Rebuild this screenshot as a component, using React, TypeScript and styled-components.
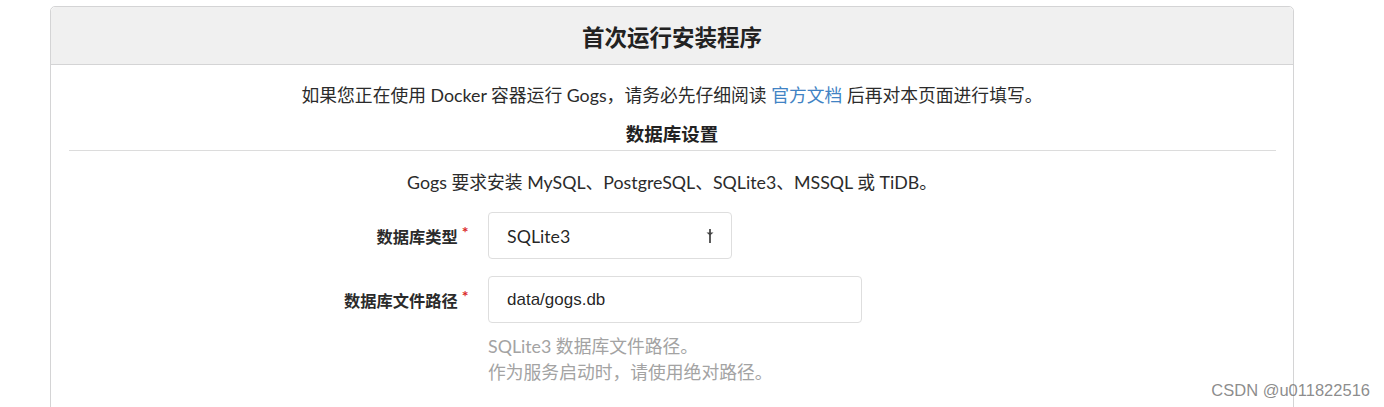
import React from 'react';
import styled, { createGlobalStyle } from 'styled-components';

const GlobalStyle = createGlobalStyle`
  html, body {
    margin: 0;
    padding: 0;
    background: #ffffff;
  }
  body {
    font-family: Lato, "Noto Sans CJK SC", sans-serif;
    color: rgba(0, 0, 0, 0.87);
  }
`;

const Page = styled.div`
  position: relative;
  width: 1384px;
  height: 407px;
  overflow: hidden;
  padding: 6px 0 0 50px;
  box-sizing: border-box;
`;

const Card = styled.section`
  width: 1244px;
  border: 1px solid #d4d4d5;
  border-radius: 5px;
  box-sizing: border-box;
  min-height: 420px;
`;

const CardHeader = styled.h3`
  margin: 0;
  height: 57px;
  display: flex;
  align-items: center;
  justify-content: center;
  background: #f0f0f0;
  border-bottom: 1px solid #d4d4d5;
  border-radius: 5px 5px 0 0;
  font-size: 22.5px;
  font-weight: 700;
  color: #222222;
`;

const CardBody = styled.div`
  padding: 17px 17.5px 0;
`;

const Notice = styled.p`
  margin: 0;
  text-align: center;
  font-size: 17.8px;
  line-height: 26px;
  color: #2b2b2b;
`;

const Link = styled.a`
  color: #4183c4;
  text-decoration: none;
`;

const SectionTitle = styled.h4`
  margin: 14px 0 0;
  padding-bottom: 4px;
  text-align: center;
  font-size: 18.5px;
  line-height: 24px;
  font-weight: 700;
  color: #222222;
  border-bottom: 1px solid #dcdcdc;
`;

const Requirement = styled(Notice)`
  margin-top: 18px;
`;

const FieldRow = styled.div`
  display: flex;
  align-items: center;
  margin-top: 17px;
`;

const Label = styled.label`
  width: 400px;
  margin-right: 19.5px;
  text-align: right;
  font-size: 16.25px;
  font-weight: 700;
  color: #2b2b2b;
  &::after {
    content: '*';
    color: #db2828;
    margin-left: 4px;
    position: relative;
    top: -5px;
    font-size: 16px;
  }
`;

const Box = styled.div<{ $width: number }>`
  width: ${({ $width }) => $width}px;
  height: 47px;
  box-sizing: border-box;
  border: 1px solid #dedede;
  border-radius: 4px;
  padding: 0 16px 0 18px;
  display: flex;
  align-items: center;
  justify-content: space-between;
  font-size: 17.8px;
  color: rgba(0, 0, 0, 0.87);
`;

const InputValue = styled.span`
  font-family: "Liberation Sans", Arial, sans-serif;
  font-size: 17px;
`;

const Help = styled.div`
  margin: 10px 0 0 419.5px;
  font-size: 17.8px;
  line-height: 26px;
  color: #a3a3a3;
`;

const Watermark = styled.div`
  position: absolute;
  right: 14px;
  bottom: 7px;
  font-family: "Liberation Sans", Arial, sans-serif;
  font-size: 16.5px;
  color: rgba(110, 110, 110, 0.8);
`;

const DropIcon = () => (
  <svg width="10" height="16" viewBox="0 0 10 16">
    <path d="M5 1 V15" stroke="#333" strokeWidth="1.6" />
    <path d="M1.5 4.5 H8.5 L5 7.5 Z" fill="#444" />
  </svg>
);

export default function App() {
  return (
    <>
      <GlobalStyle />
      <Page>
        <Card>
          <CardHeader>首次运行安装程序</CardHeader>
          <CardBody>
            <Notice>
              如果您正在使用 Docker 容器运行 Gogs，请务必先仔细阅读 <Link href="#">官方文档</Link> 后再对本页面进行填写。
            </Notice>
            <SectionTitle>数据库设置</SectionTitle>
            <Requirement>Gogs 要求安装 MySQL、PostgreSQL、SQLite3、MSSQL 或 TiDB。</Requirement>
            <FieldRow>
              <Label>数据库类型</Label>
              <Box $width={244}>
                <span>SQLite3</span>
                <DropIcon />
              </Box>
            </FieldRow>
            <FieldRow>
              <Label>数据库文件路径</Label>
              <Box $width={374}>
                <InputValue>data/gogs.db</InputValue>
              </Box>
            </FieldRow>
            <Help>
              SQLite3 数据库文件路径。
              <br />
              作为服务启动时，请使用绝对路径。
            </Help>
          </CardBody>
        </Card>
        <Watermark>CSDN @u011822516</Watermark>
      </Page>
    </>
  );
}
